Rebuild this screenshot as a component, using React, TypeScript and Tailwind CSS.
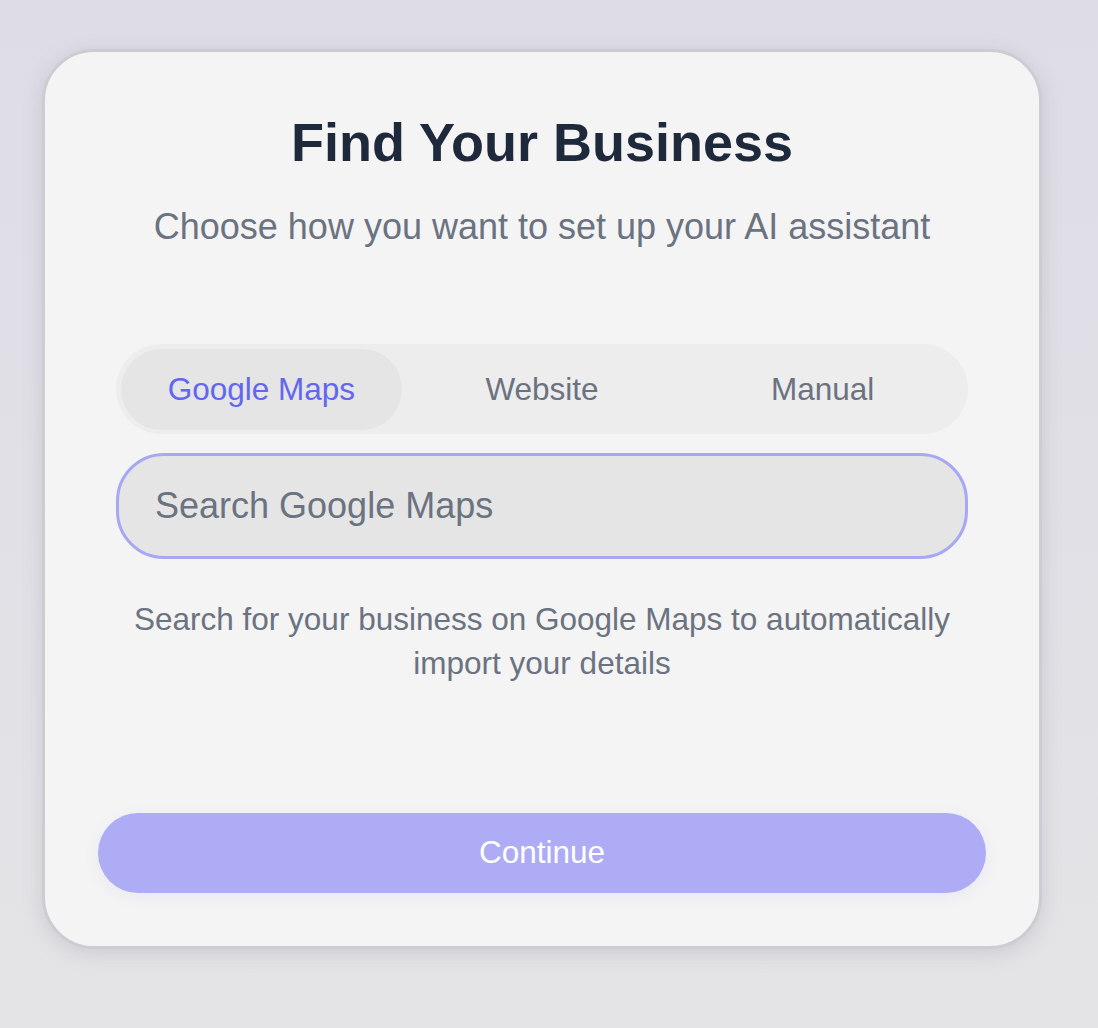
import { useState } from 'react';

const tabs = ['Google Maps', 'Website', 'Manual'];

export default function App() {
  const [active, setActive] = useState('Google Maps');

  return (
    <div
      className="min-h-screen w-full bg-gradient-to-b from-[#dedce6] to-[#e4e4e6] pt-[49px] pl-[42px]"
      style={{ fontFamily: '"Liberation Sans", Arial, sans-serif' }}
    >
      <div className="w-[1000px] h-[900px] rounded-[52px] border-[3px] border-[#cdccd2] bg-[#f4f4f4] shadow-[0_4px_20px_rgba(120,118,135,0.22)] px-[53px] pt-[58px] pb-[53px] flex flex-col">
        <h1 className="text-center text-[54px] leading-[64px] font-bold text-[#1e293b]">Find Your Business</h1>
        <p className="mt-[29px] text-center text-[36px] leading-[48px] text-[#6b7280]">
          Choose how you want to set up your AI assistant
        </p>

        <div className="mx-[18px] mt-[93px] flex flex-col">
          <div className="h-[90px] rounded-full bg-[#ededed] pt-[5px] pb-[4px] px-[5px] grid grid-cols-3">
            {tabs.map(t => (
              <button
                key={t}
                onClick={() => setActive(t)}
                className={
                  t === active
                    ? 'h-[81px] rounded-full bg-[#e5e5e5] text-[31.5px] text-[#6366f1]'
                    : 'h-[81px] rounded-full text-[31.5px] text-[#6b7280]'
                }
              >
                {t}
              </button>
            ))}
          </div>

          <input
            className="mt-[19px] h-[106px] rounded-[48px] border-[3px] border-[#a8a7f3] bg-[#e5e5e5] px-[36px] text-[36px] text-[#374151] placeholder:text-[#6b7280] outline-none"
            placeholder="Search Google Maps"
          />

          <p className="mt-[38px] text-center text-[31.5px] leading-[44px] text-[#6b7280]">
            Search for your business on Google Maps to automatically
            <br />
            import your details
          </p>
        </div>

        <button className="mt-auto h-[80px] w-full rounded-full bg-[#aeacf5] text-[31.5px] text-white shadow-[0_4px_16px_rgba(99,102,241,0.08)]">
          Continue
        </button>
      </div>
    </div>
  );
}
